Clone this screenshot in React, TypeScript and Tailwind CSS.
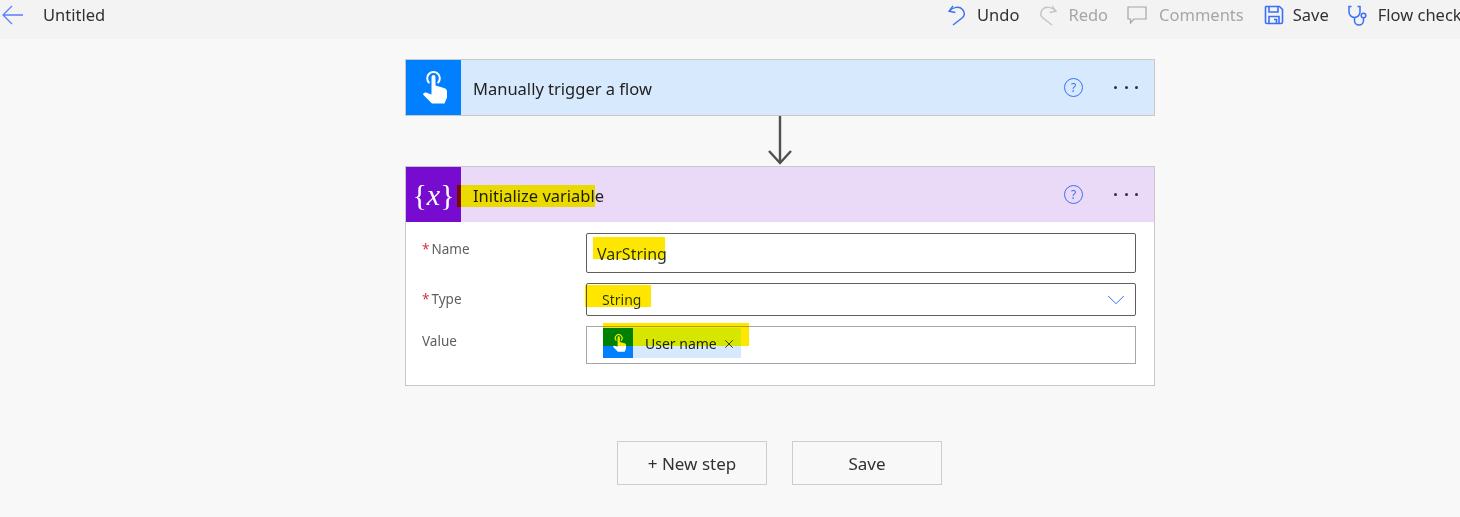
import { ChevronDown, X } from "lucide-react";

function HandIcon({ className }: { className?: string }) {
  return (
    <svg viewBox="0 0 24 33" className={className} fill="none">
      <path d="M5.800 11.500a6.300 6.300 0 1 1 9.400 0" stroke="white" strokeWidth="2" strokeLinecap="round" />
      <path
        d="M8.500 6a2 2 0 0 1 4 0v8.500l8.500 2.500c1.800.5 3 1.500 3 3.500v6l-2.500 6H9L.5 24c-1-1 .5-3 2.500-2.500l5.500 2z"
        fill="white"
      />
    </svg>
  );
}

function UndoIcon({ className, flip }: { className?: string; flip?: boolean }) {
  return (
    <svg viewBox="0 0 18 21" className={className} style={flip ? { transform: "scaleX(-1)" } : undefined} fill="none" stroke="currentColor" strokeWidth="1.4">
      <path d="M5 .8 1 6.300l6.300 1.200" />
      <path d="M1.300 6C5 1.800 11.500 1 14.500 4.500c2.300 2.700 2 6 .2 8L5 20" />
    </svg>
  );
}

function ToolItem({ icon, label, dim }: { icon: React.ReactNode; label: string; dim?: boolean }) {
  return (
    <div className={`flex items-center shrink-0 whitespace-nowrap ${dim ? "text-[#a6a6a6]" : "text-[#323130]"}`}>
      {icon}
      <span>{label}</span>
    </div>
  );
}

function CardHeader({ bg, tile, title, children }: { bg: string; tile: string; title: string; children: React.ReactNode }) {
  return (
    <div className={`flex items-center h-[55px] ${bg}`}>
      <div className={`flex items-center justify-center w-[55px] h-full ${tile}`}>{children}</div>
      <div className="flex-1 pl-3 pt-[3px] text-[16.5px] text-[#1f1f1f]">{title}</div>
      <div className="flex items-center justify-center w-[19px] h-[19px] rounded-full border-[1.5px] border-[#3a6ff7] text-[12px] leading-none text-[#3a6ff7]">?</div>
      <div className="flex items-center gap-[7.5px] ml-[31px] mr-[16px]">
        <span className="w-[3px] h-[3px] rounded-full bg-[#323130]" />
        <span className="w-[3px] h-[3px] rounded-full bg-[#323130]" />
        <span className="w-[3px] h-[3px] rounded-full bg-[#323130]" />
      </div>
    </div>
  );
}

function Label({ text, required }: { text: string; required?: boolean }) {
  return (
    <div className="w-[164px] shrink-0 text-[13.5px] leading-[18px] text-[#5f5e5c]">
      {required && <span className="text-[#d13438] mr-[2px]">*</span>}
      {text}
    </div>
  );
}

export default function App() {
  return (
    <div
      className="relative w-[1460px] h-[517px] overflow-hidden bg-[#f8f8f8]"
      style={{ fontFamily: '"Noto Sans", "Open Sans", sans-serif' }}
    >
      <header className="flex items-center h-[39px] pb-[9px] bg-[#f3f3f3] text-[16.5px]">
        <svg viewBox="0 0 22 20" className="w-[22px] h-5 ml-[2px] text-[#5b7fff] shrink-0" fill="none" stroke="currentColor" strokeWidth="1.3">
          <path d="M1 10h20M10 1l-9 9 9 9" />
        </svg>
        <div className="ml-[19px] w-[905px] shrink-0 text-[#323130]">Untitled</div>
        <div className="flex items-center">
          <ToolItem label="Undo" icon={<UndoIcon className="w-[18px] h-[21px] mr-[11px] text-[#3a6ff7]" />} />
          <div className="w-[20px] shrink-0" />
          <ToolItem dim label="Redo" icon={<UndoIcon flip className="w-[18px] h-[21px] mr-[11px] text-[#c4c4c4]" />} />
          <div className="w-[19px] shrink-0" />
          <ToolItem
            dim
            label="Comments"
            icon={
              <svg viewBox="0 0 20 20" className="w-5 h-5 mr-[12px]" fill="none" stroke="currentColor" strokeWidth="1.2">
                <path d="M1 2h18v12H7l-3.500 4v-4H1z" />
              </svg>
            }
          />
          <div className="w-[20px] shrink-0" />
          <ToolItem
            label="Save"
            icon={
              <svg viewBox="0 0 20 20" className="w-5 h-5 mr-[9px] text-[#3a6ff7]" fill="none" stroke="currentColor" strokeWidth="1.6">
                <path d="M2 1.500h13.500l3 3V17a1.500 1.500 0 0 1-1.500 1.500H3A1.500 1.500 0 0 1 1.500 17V2z" />
                <path d="M5 1.500v5.500h9V1.500M5 18.500v-7h10v7M10 14.500h2.500v4" />
              </svg>
            }
          />
          <div className="w-[19px] shrink-0" />
          <ToolItem
            label="Flow check"
            icon={
              <svg viewBox="0 0 21 21" className="w-[21px] h-[21px] mr-[9px] text-[#3a6ff7]" fill="none" stroke="currentColor" strokeWidth="1.5">
                <path d="M3.500 1.500H1v5.500a5.500 5.500 0 0 0 11 0V1.500H9.500" />
                <path d="M6.500 12.500v3a4.500 4.500 0 0 0 9 0v-2.500" />
                <circle cx="15.500" cy="10.500" r="2.300" />
              </svg>
            }
          />
        </div>
      </header>

      <main className="flex flex-col items-center pt-5 pl-[100px]">
        <section className="w-[750px] border border-[#c8c8c8]">
          <CardHeader bg="bg-[#d7e9fd]" tile="bg-[#0080ff]" title="Manually trigger a flow">
            <HandIcon className="w-6 h-[33px] ml-[3px]" />
          </CardHeader>
        </section>

        <svg viewBox="0 0 26 50" className="w-[26px] h-[50px] text-[#505050] shrink-0" fill="none" stroke="currentColor" strokeWidth="2.4">
          <path d="M13 0v47M2 35l11 12 11-12" />
        </svg>

        <section className="w-[750px] border border-[#c8c8c8] bg-white">
          <CardHeader bg="bg-[#ebdaf7]" tile="bg-[#770bd0]" title="Initialize variable">
            <span className="flex items-center text-white text-[30px] leading-none whitespace-nowrap" style={{ fontFamily: '"Liberation Serif", serif' }}>
              <span>{"{"}</span>
              <i>x</i>
              <span>{"}"}</span>
            </span>
          </CardHeader>
          <div className="flex flex-col gap-[10px] pt-[11px] pb-[21px] pl-4 pr-[18px]">
            <div className="flex">
              <div className="pt-[7px]">
                <Label required text="Name" />
              </div>
              <div className="flex flex-1 items-center h-10 pl-[10px] pt-[2px] border border-[#605e5c] rounded-[2px] text-[16px] text-[#323130]">VarString</div>
            </div>
            <div className="flex">
              <div className="pt-[7px]">
                <Label required text="Type" />
              </div>
              <div className="flex flex-1 items-center justify-between h-[33px] pl-[15px] pr-[4px] border border-[#605e5c] rounded-[2px] text-[14px] text-[#323130]">
                String
                <ChevronDown strokeWidth={0.8} className="w-[30px] h-[30px] text-[#3a6ff7]" />
              </div>
            </div>
            <div className="flex">
              <div className="pt-[6px]">
                <Label text="Value" />
              </div>
              <div className="flex flex-1 h-[38px] pl-4 pt-[1px] border border-[#a6a6a6]">
                <div className="flex items-center w-[138px] h-[30px] bg-[#d7e9fd]">
                  <div className="flex items-center justify-center w-[30px] h-full bg-[#0080ff]">
                    <HandIcon className="w-[13px] h-[18px] ml-[3px]" />
                  </div>
                  <span className="ml-3 text-[14px] text-[#1f1f1f]">User name</span>
                  <X strokeWidth={1.6} className="w-[14px] h-[14px] ml-[5px] mt-[1px] text-[#323130]" />
                </div>
              </div>
            </div>
          </div>
        </section>

        <div className="flex gap-[25px] mt-[55px] mr-[1px] text-[17px] text-[#323130]">
          <button className="w-[150px] h-[44px] pt-[1px] border border-[#cdcdcd]">+ New step</button>
          <button className="w-[150px] h-[44px] pt-[1px] border border-[#cdcdcd]">Save</button>
        </div>
      </main>

      {/* yellow marker strokes drawn over the screenshot */}
      <div className="absolute left-[457px] top-[185px] w-[138px] h-[22px] bg-[#ffe600] mix-blend-darken" />
      <div className="absolute left-[593px] top-[237px] w-[72px] h-[22px] bg-[#ffe600] mix-blend-darken" />
      <div className="absolute left-[585px] top-[285px] w-[66px] h-[22px] bg-[#ffe600] mix-blend-darken" />
      <div className="absolute left-[603px] top-[323px] w-[146px] h-[23px] bg-[#ffe600] mix-blend-darken" />
    </div>
  );
}
